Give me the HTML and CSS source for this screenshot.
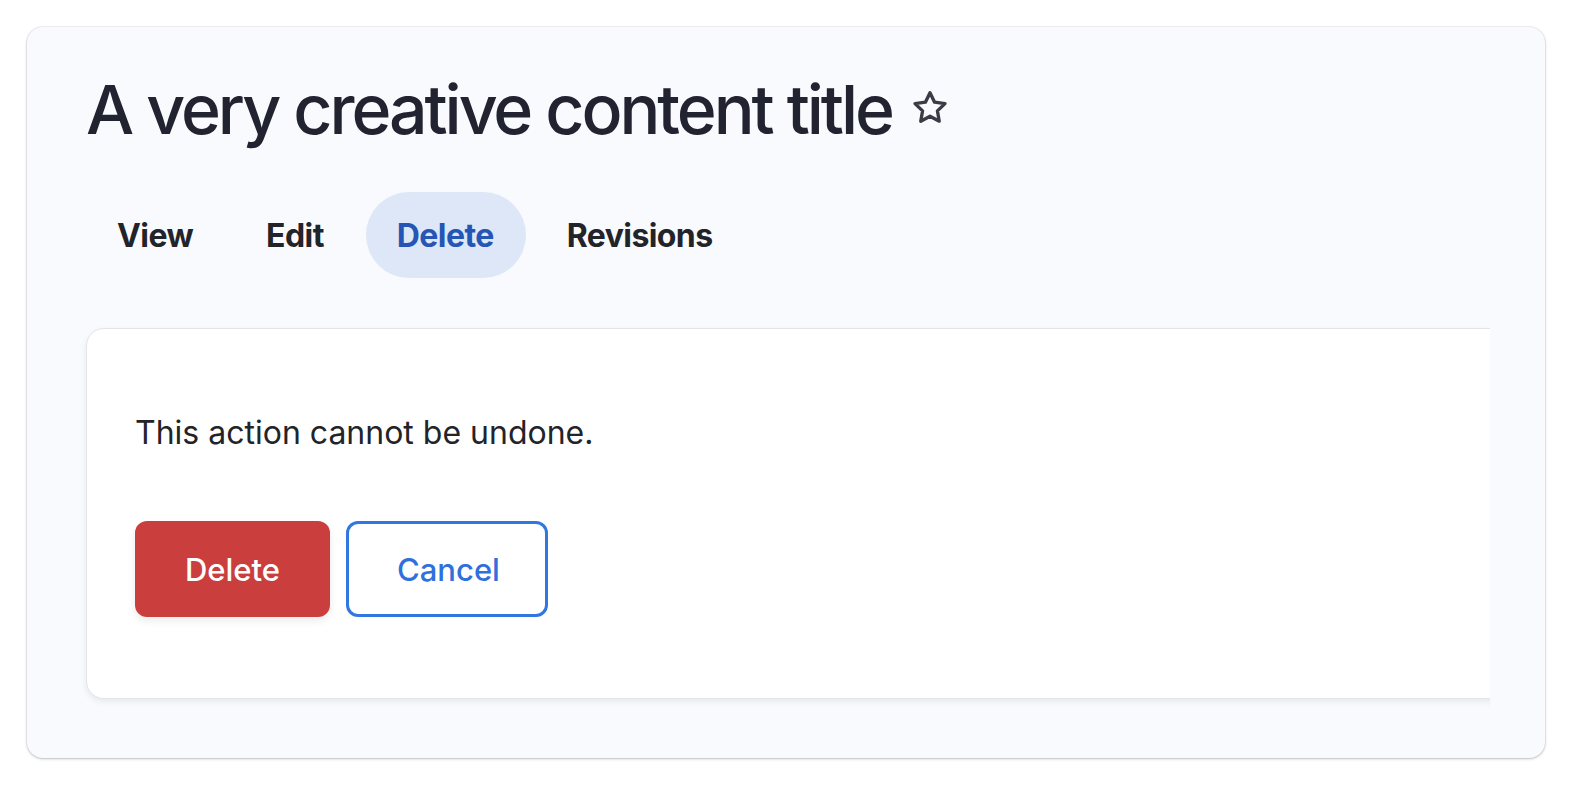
FILE: index.html
```html
<!DOCTYPE html>
<html lang="en">
<head>
<meta charset="utf-8">
<title>Delete</title>
<link rel="stylesheet" href="styles.css">
</head>
<body>
<div class="frame">
  <div class="title-row">
    <h1 class="page-title">A very creative content title</h1>
    <svg class="star" viewBox="0 0 24 24" width="40" height="40" aria-hidden="true">
      <path d="M12 2.8l2.75 5.7 6.25.85-4.55 4.35 1.1 6.2L12 16.9l-5.55 3 1.1-6.2L3 9.35l6.25-.85z" fill="none" stroke="#3a3b45" stroke-width="2" stroke-linejoin="round"/>
    </svg>
  </div>
  <nav class="tabs">
    <a class="tab">View</a>
    <a class="tab">Edit</a>
    <a class="tab tab-active">Delete</a>
    <a class="tab">Revisions</a>
  </nav>
  <div class="clip">
    <div class="card">
      <p class="msg">This action cannot be undone.</p>
      <div class="actions">
        <button class="btn btn-danger">Delete</button>
        <button class="btn btn-outline">Cancel</button>
      </div>
    </div>
  </div>
</div>
</body>
</html>
```

FILE: styles.css
```css
* { box-sizing: border-box; }
html, body { margin: 0; padding: 0; background: #ffffff; }
body {
  font-family: Inter, "Noto Sans", sans-serif;
  color: #232429;
  width: 1572px;
  height: 786px;
  overflow: hidden;
}
.frame {
  margin: 27px 0 0 27px;
  width: 1518px;
  height: 731px;
  border-radius: 16px;
  background: #f9fafd;
  box-shadow: 0 0 0 1px rgba(0,0,0,0.05), 0 1px 3px rgba(0,0,0,0.22);
  padding: 47px 55px 0 59px;
  overflow: hidden;
}
.title-row {
  display: flex;
  align-items: center;
  gap: 18px;
  height: 70px;
}
.page-title {
  margin: 0;
  font-size: 68px;
  font-weight: 500;
  line-height: 70px;
  letter-spacing: -0.045em;
  color: #222330;
}
.star { flex: none; margin-top: -2px; }
.tabs {
  display: flex;
  gap: 10px;
  margin-top: 48px;
  height: 86px;
}
.tab {
  display: flex;
  align-items: center;
  padding: 0 32px 0 31px;
  border-radius: 43px;
  font-size: 32px;
  font-weight: 700;
  color: #232429;
  letter-spacing: -0.018em;
}
.tab-active {
  background: #dde7f7;
  color: #2556b5;
}
.clip {
  overflow: hidden;
  margin: 30px 0 0 -20px;
  padding: 20px 0 20px 20px;
}
.card {
  width: 1460px;
  background: #ffffff;
  border: 1px solid #e4e5ea;
  border-radius: 18px;
  box-shadow: 0 3px 6px rgba(0,0,0,0.07);
  padding: 84px 48px 81px;
}
.msg {
  margin: 0;
  font-size: 32px;
  line-height: 40px;
  font-weight: 400;
}
.actions {
  display: flex;
  gap: 16px;
  margin-top: 68px;
}
.btn {
  height: 96px;
  padding: 0 48px;
  border-radius: 12px;
  font-family: Inter, "Noto Sans", sans-serif;
  font-size: 31px;
  font-weight: 500;
  cursor: pointer;
}
.btn-danger {
  background: #cb3e3e;
  border: 0;
  color: #ffffff;
  box-shadow: 0 4px 8px rgba(0,0,0,0.08);
  width: 195px;
}
.btn-outline {
  background: #ffffff;
  border: 3px solid #3177e0;
  color: #2f70dc;
  width: 202px;
}
```
